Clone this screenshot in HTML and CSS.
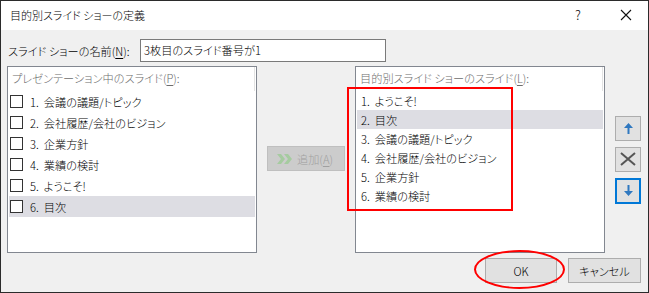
FILE: index.html
```html
<!DOCTYPE html>
<html lang="ja">
<head>
<meta charset="utf-8">
<title>目的別スライド ショーの定義</title>
<link rel="stylesheet" href="styles.css">
</head>
<body>
<div class="window">
  <div class="titlebar">
    <span class="title">目的別スライド ショーの定義</span>
    <span class="help">?</span>
    <span class="close"><svg width="12" height="12" viewBox="0 0 12 12"><path d="M1 1 L11 11 M11 1 L1 11" stroke="#111" stroke-width="1.1" fill="none"/></svg></span>
  </div>
  <div class="content">
    <div class="name-row">
      <label class="name-label">スライド ショーの名前(<u>N</u>):</label>
      <div class="textbox">3枚目のスライド番号が1</div>
    </div>
    <div class="lists">
      <div class="listbox">
        <div class="list-header">プレゼンテーション中のスライド(<u>P</u>):</div>
        <div class="row check"><span class="box"></span><span>1. 会議の議題/トピック</span></div>
        <div class="row check"><span class="box"></span><span>2. 会社履歴/会社のビジョン</span></div>
        <div class="row check"><span class="box"></span><span>3. 企業方針</span></div>
        <div class="row check"><span class="box"></span><span>4. 業績の検討</span></div>
        <div class="row check"><span class="box"></span><span>5. ようこそ!</span></div>
        <div class="row check selected"><span class="box"></span><span>6. 目次</span></div>
      </div>
      <div class="middle">
        <div class="add-btn">
          <svg width="16" height="10" viewBox="0 0 16 10"><path d="M0 0 L4 0 L8 5 L4 10 L0 10 L4 5 Z M7 0 L11 0 L15 5 L11 10 L7 10 L11 5 Z" fill="#a6cba0"/></svg>
          <span>追加(<u>A</u>)</span>
        </div>
      </div>
      <div class="listbox">
        <div class="list-header">目的別スライド ショーのスライド(<u>L</u>):</div>
        <div class="row plain">1. ようこそ!</div>
        <div class="row plain selected">2. 目次</div>
        <div class="row plain">3. 会議の議題/トピック</div>
        <div class="row plain">4. 会社履歴/会社のビジョン</div>
        <div class="row plain">5. 企業方針</div>
        <div class="row plain">6. 業績の検討</div>
      </div>
      <div class="side-buttons">
        <div class="side-btn"><svg width="9" height="11" viewBox="0 0 9 11"><path d="M4.5 0 L9 5 L5.5 5 L5.5 11 L3.5 11 L3.5 5 L0 5 Z" fill="#2f78c0"/></svg></div>
        <div class="side-btn"><svg width="16" height="14" viewBox="0 0 16 14"><path d="M1 1 L15 13 M15 1 L1 13" stroke="#555" stroke-width="2" fill="none"/></svg></div>
        <div class="side-btn focused"><svg width="9" height="11" viewBox="0 0 9 11"><path d="M4.5 11 L9 6 L5.5 6 L5.5 0 L3.5 0 L3.5 6 L0 6 Z" fill="#2f78c0"/></svg></div>
      </div>
    </div>
    <div class="footer">
      <div class="btn ok">OK</div>
      <div class="btn cancel">キャンセル</div>
    </div>
  </div>
  <div class="annot-rect"></div>
  <div class="annot-ellipse"></div>
</div>
</body>
</html>
```
FILE: styles.css
```css
* { box-sizing: border-box; }
html, body { margin: 0; padding: 0; }
body {
  width: 649px;
  height: 293px;
  font-family: "Noto Sans CJK JP", "Noto Sans", sans-serif;
  font-size: 11.2px;
  font-weight: 300;
  font-feature-settings: "palt";
  color: #000;
  background: #f0f0f0;
}
u { text-decoration: underline; text-underline-offset: 2px; }

.window {
  position: relative;
  width: 649px;
  height: 293px;
  border: 1px solid #2b2b2b;
  background: #f0f0f0;
  display: flex;
  flex-direction: column;
}

.titlebar {
  height: 29px;
  background: #fff;
  display: flex;
  align-items: center;
  padding-left: 9px;
  flex-shrink: 0;
}
.title { flex: 1; font-size: 11px; line-height: 16px; margin-top: -1px; }
.help { width: 12px; margin-right: 33px; font-size: 13px; line-height: 16px; color: #111; margin-top: -2px; }
.close { width: 12px; height: 12px; margin-right: 16px; display: flex; margin-top: -1px; }

.content {
  padding: 9px 7px 0 6px;
  display: flex;
  flex-direction: column;
}

.name-row { display: flex; align-items: center; height: 23px; }
.name-label { width: 133px; padding-left: 1px; line-height: 16px; }
.textbox {
  width: 246px;
  height: 23px;
  background: #fff;
  border: 1px solid #7a7a7a;
  padding-left: 3px;
  line-height: 20px;
}

.lists {
  margin-top: 4px;
  display: grid;
  grid-template-columns: 250px 98px 250px 36px;
  height: 187px;
}
.listbox {
  background: #fff;
  border: 1px solid #828790;
  padding: 0 1px;
  height: 187px;
}
.list-header {
  height: 24px;
  line-height: 22px;
  padding-left: 3px;
  color: #6d6d6d;
  border-right: 1px solid #e3e3e3;
}
.row { display: flex; align-items: center; word-spacing: 2.5px; }
.row.check { height: 21px; padding-left: 1px; }
.row.plain { height: 19px; padding-left: 4px; }
.row.selected { background: #dddde3; }
.box {
  width: 13px;
  height: 13px;
  border: 1px solid #333;
  background: #fff;
  margin-right: 7px;
}

.middle { display: flex; align-items: center; justify-content: center; }
.add-btn {
  width: 78px;
  height: 25px;
  margin-top: -2px;
  background: #cccccc;
  border: 1px solid #bfbfbf;
  color: #a0a0a0;
  display: flex;
  align-items: center;
  justify-content: center;
  gap: 4px;
  padding-right: 2px;
}

.side-buttons {
  padding-left: 10px;
  display: flex;
  flex-direction: column;
  justify-content: center;
  gap: 6px;
}
.side-btn {
  width: 26px;
  height: 25px;
  background: #e1e1e1;
  border: 1px solid #adadad;
  display: flex;
  align-items: center;
  justify-content: center;
}
.side-btn.focused { border: 2px solid #0078d7; height: 26px; }

.footer {
  margin-top: 5px;
  display: flex;
  justify-content: flex-end;
  gap: 11px;
}
.btn {
  height: 25px;
  background: #e1e1e1;
  border: 1px solid #adadad;
  display: flex;
  align-items: center;
  justify-content: center;
  line-height: 16px;
}
.btn.ok { width: 72px; }
.btn.cancel { width: 73px; }

.annot-rect {
  position: absolute;
  left: 346px;
  top: 86px;
  width: 166px;
  height: 124px;
  border: 2px solid #ff0000;
}
.annot-ellipse {
  position: absolute;
  left: 473px;
  top: 249px;
  width: 91px;
  height: 39px;
  border: 2px solid #ff0000;
  border-radius: 50%;
}
```
